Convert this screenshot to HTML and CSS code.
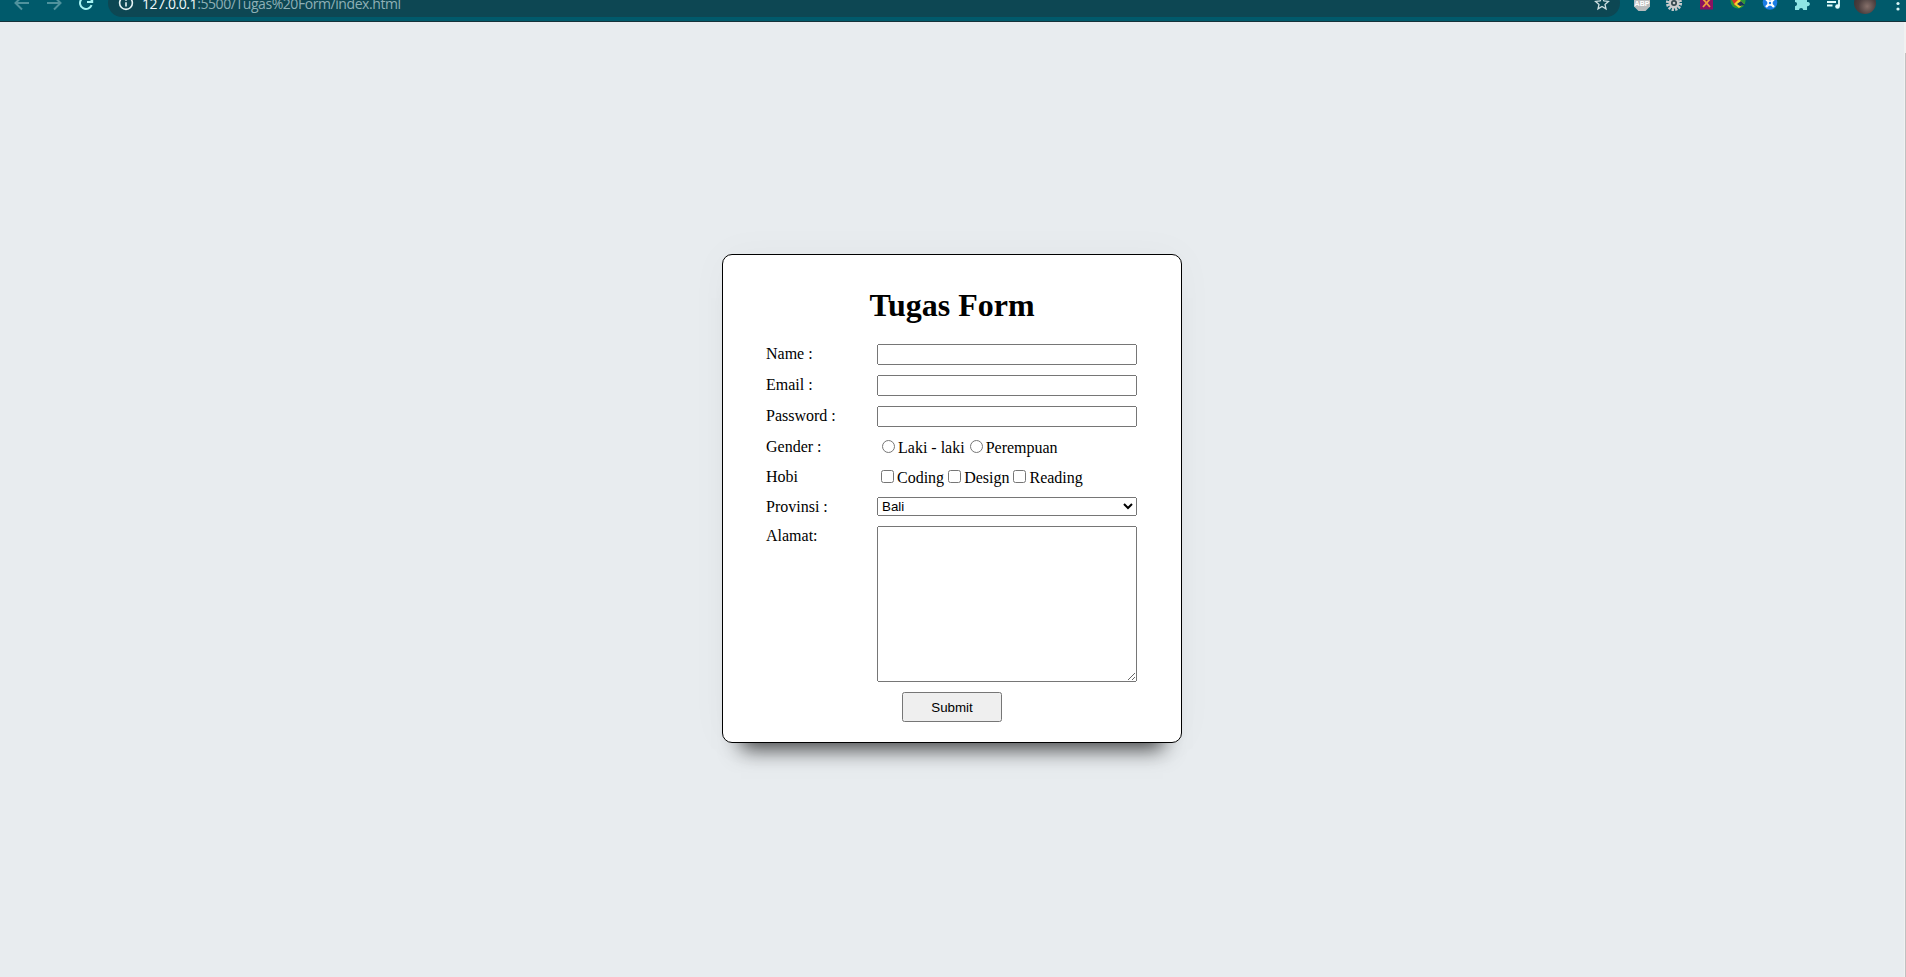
FILE: index.html
```html
<!DOCTYPE html>
<html lang="id">
<head>
<meta charset="utf-8">
<title>Tugas Form</title>
<link rel="stylesheet" href="styles.css">
</head>
<body>
<header class="toolbar">
  <div class="nav">
    <svg class="nav-icon dim" viewBox="0 0 18 18"><path d="M16 9H3M9 2.5L2.5 9L9 15.5"/></svg>
    <svg class="nav-icon dim" viewBox="0 0 18 18"><path d="M2 9H15M9 2.5L15.5 9L9 15.5"/></svg>
    <svg class="nav-icon" viewBox="0 0 18 18"><path d="M14.6 11.2A6 6 0 1 1 13.3 4.8L15 6.6M15.2 2V8H10"/></svg>
  </div>
  <div class="address">
    <svg class="info" viewBox="0 0 16 16"><circle cx="8" cy="8" r="6.4"/><path d="M8 7.2V11.6M8 4.3V5.8"/></svg>
    <span class="url"><span class="host">127.0.0.1</span>:5500/Tugas%20Form/index.html</span>
    <svg class="star" viewBox="0 0 16 16"><path d="M8 1.8L9.9 6L14.4 6.4L11 9.4L12 13.9L8 11.5L4 13.9L5 9.4L1.6 6.4L6.1 6Z"/></svg>
  </div>
  <div class="extensions">
    <svg viewBox="0 0 18 18"><path fill="#b9bcbd" d="M5.500 1h7L17 5.500v7L12.500 17h-7L1 12.500v-7Z"/><text class="abp" x="9" y="12">ABP</text></svg>
    <svg viewBox="0 0 18 18"><circle cx="9" cy="9" r="6.600" fill="none" stroke="#c9cbcc" stroke-width="3" stroke-dasharray="2.200 1.256"/><circle cx="9" cy="9" r="5.500" fill="#c9cbcc"/><circle cx="9" cy="9" r="3" fill="#34474d"/><circle cx="9" cy="9" r="1.300" fill="#c9cbcc"/></svg>
    <svg viewBox="0 0 18 18"><rect x="3" y="2" width="13" height="13.500" fill="#8a1260"/><path d="M6 5L13 13M13 5L6 13" stroke="#f0a03c" stroke-width="1.800"/></svg>
    <svg viewBox="0 0 18 18"><circle cx="9" cy="7" r="7.500" fill="#2c9a38"/><path d="M2 4L9 1V10L6 12Z" fill="#d8342b"/><path d="M5 10L10 5L15 10L10 14Z" fill="#f5d22d"/><path d="M8 10L12 7L16 11L11 12Z" fill="#17335c"/></svg>
    <svg viewBox="0 0 18 18"><circle cx="9" cy="8.500" r="7.300" fill="#1b7de6"/><path d="M5 5L13 13M13 5L5 13" stroke="#fff" stroke-width="2.400"/><circle cx="9" cy="9" r="2.700" fill="#fff"/><circle cx="9" cy="9" r="1.200" fill="#1b7de6"/></svg>
    <svg viewBox="0 0 18 18"><path fill="#8fe6e4" d="M2 4H5.500A2.200 2.200 0 1 1 9.800 4H14V8A2.200 2.200 0 1 1 14 12.200V16H10.200A2.100 2.100 0 0 0 6 16H2V12.200A2.100 2.100 0 0 0 2 8Z"/></svg>
    <svg viewBox="0 0 18 18"><path d="M2 4.500H11M2 8H11M2 11.500H7.500M14 12V3.500H17" fill="none" stroke="#e2fbfb" stroke-width="1.800"/><circle cx="12.500" cy="12.500" r="2.300" fill="#e2fbfb"/></svg>
  </div>
  <div class="avatar"></div>
  <svg class="more" viewBox="0 0 6 18"><circle cx="3" cy="3" r="1.600"/><circle cx="3" cy="8.500" r="1.600"/><circle cx="3" cy="14" r="1.600"/></svg>
</header>
<main class="page">
  <form class="card">
    <h1 class="title">Tugas Form</h1>
    <div class="fields">
      <label for="name">Name :</label><input class="control" id="name" type="text">
      <label for="email">Email :</label><input class="control" id="email" type="email">
      <label for="password">Password :</label><input class="control" id="password" type="password">
      <span>Gender :</span>
      <div class="choices"><input type="radio" name="gender">Laki - laki<input type="radio" name="gender">Perempuan</div>
      <span>Hobi</span>
      <div class="choices"><input type="checkbox">Coding<input type="checkbox">Design<input type="checkbox">Reading</div>
      <label for="province">Provinsi :</label><select class="control" id="province"><option>Bali</option></select>
      <label for="address">Alamat:</label><textarea class="control" id="address"></textarea>
    </div>
    <button class="submit" type="button">Submit</button>
  </form>
</main>
<div class="scrollbar"><div class="thumb"></div></div>
</body>
</html>
```
FILE: styles.css
```css
* { box-sizing: border-box; }
body {
  margin: 0;
  height: 977px;
  overflow: hidden;
  display: flex;
  flex-direction: column;
  background: #e8ecef;
  color: #000;
  font: 16px/19px "Liberation Serif", "Times New Roman", serif;
}
.toolbar {
  height: 22px;
  flex: none;
  display: flex;
  align-items: flex-start;
  background: #005a6b;
  border-bottom: 1px solid #15323a;
  overflow: hidden;
}
.toolbar svg { flex: none; }
.nav { display: flex; gap: 14px; padding-left: 13px; width: 108px; margin-top: -6px; }
.nav-icon { width: 18px; height: 18px; fill: none; stroke: #a5f3f2; stroke-width: 2; }
.dim { stroke: #4f929d; }
.address {
  width: 1512px;
  height: 28px;
  margin-top: -11px;
  padding: 6px 10px;
  display: flex;
  align-items: center;
  border-radius: 14px;
  background: #0d4753;
}
.info { width: 16px; height: 16px; fill: none; stroke: #e6f4f5; stroke-width: 1.600; }
.url {
  margin-left: 8px;
  padding-top: 1px;
  color: #8eb0b6;
  font: 14px/18px "Open Sans", "Noto Sans", sans-serif;
  letter-spacing: -.43px;
}
.host { color: #f2fafa; }
.star { width: 16px; height: 16px; margin-left: auto; fill: none; stroke: #cfe0e2; stroke-width: 1.300; }
.extensions { display: flex; gap: 14px; margin: -6px 0 0 13px; }
.extensions svg { width: 18px; height: 18px; }
.abp { fill: #fff; font: bold 7px "Liberation Sans", sans-serif; text-anchor: middle; }
.avatar {
  width: 22px;
  height: 22px;
  flex: none;
  margin: -8px 0 0 11px;
  border-radius: 50%;
  background: radial-gradient(circle at 60% 65%, #86706a, #4c3f3f 45%, #2d2a2d);
}
.more { width: 6px; height: 18px; margin: -5px 0 0 19px; fill: #d8f5f5; }
.page { flex: 1; display: flex; justify-content: center; align-items: flex-start; padding: 232px 2px 0 0; }
.card {
  width: 460px;
  height: 489px;
  display: flex;
  flex-direction: column;
  align-items: center;
  padding: 32px 44px 0;
  background: #fff;
  border: 1px solid #000;
  border-radius: 10px;
  box-shadow: 0 25px 20px -19px rgba(0, 0, 0, .72), 0 0 40px rgba(0, 0, 0, .03);
}
.title { margin: 0 0 21px; font-size: 32px; line-height: 36px; }
.fields {
  width: 372px;
  padding-right: 1px;
  display: grid;
  grid-template-columns: 111px 260px;
  grid-template-rows: 21px 21px 21px 20px 20px 19px 156px;
  row-gap: 10px;
}
.control { width: 260px; height: 100%; margin: 0; }
.control:is(textarea) { resize: both; }
.choices { height: 20px; white-space: nowrap; }
.submit { width: 100px; height: 30px; margin-top: 10px; }
.scrollbar { position: absolute; top: 22px; right: 0; bottom: 0; width: 2px; padding: 31px 0 0 1px; background: #f1f1f1; }
.thumb { height: 100%; background: #c1c1c1; }
```
